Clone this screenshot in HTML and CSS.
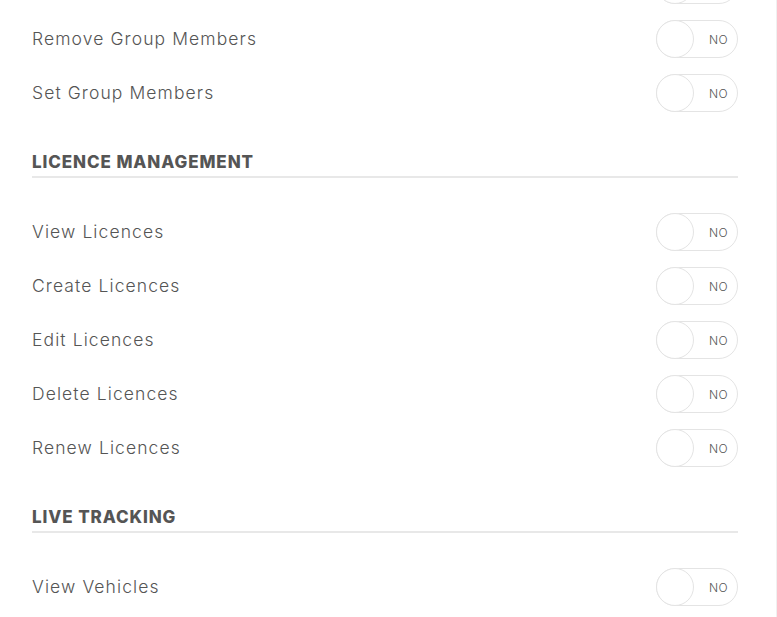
FILE: index.html
```html
<!DOCTYPE html>
<html lang="en">
<head>
  <meta charset="UTF-8" />
  <meta name="viewport" content="width=device-width, initial-scale=1.0" />
  <title>Permissions</title>
  <link rel="stylesheet" href="styles.css">
</head>
<body>

<div class="permissions">

  <div class="section">
    <div class="row">
      <span class="label">Add Group Members</span>
      <span class="toggle"><span class="knob"></span><span class="state">NO</span></span>
    </div>
    <div class="row">
      <span class="label">Remove Group Members</span>
      <span class="toggle"><span class="knob"></span><span class="state">NO</span></span>
    </div>
    <div class="row">
      <span class="label">Set Group Members</span>
      <span class="toggle"><span class="knob"></span><span class="state">NO</span></span>
    </div>
  </div>

  <div class="section">
    <h3>Licence Management</h3>
    <div class="row">
      <span class="label">View Licences</span>
      <span class="toggle"><span class="knob"></span><span class="state">NO</span></span>
    </div>
    <div class="row">
      <span class="label">Create Licences</span>
      <span class="toggle"><span class="knob"></span><span class="state">NO</span></span>
    </div>
    <div class="row">
      <span class="label">Edit Licences</span>
      <span class="toggle"><span class="knob"></span><span class="state">NO</span></span>
    </div>
    <div class="row">
      <span class="label">Delete Licences</span>
      <span class="toggle"><span class="knob"></span><span class="state">NO</span></span>
    </div>
    <div class="row">
      <span class="label">Renew Licences</span>
      <span class="toggle"><span class="knob"></span><span class="state">NO</span></span>
    </div>
  </div>

  <div class="section">
    <h3>Live Tracking</h3>
    <div class="row">
      <span class="label">View Vehicles</span>
      <span class="toggle"><span class="knob"></span><span class="state">NO</span></span>
    </div>
  </div>

</div>

</body>
</html>
```

FILE: styles.css
```css
* {
  margin: 0;
  padding: 0;
  box-sizing: border-box;
}

html, body {
  height: 100%;
  overflow: hidden;
  background: #fff;
  font-family: 'Inter', 'Open Sans', sans-serif;
  color: #555;
}

body {
  border-right: 1px solid #f0f0f0;
}

/* scrolled list, the row above is cut off */
.permissions {
  width: 738px;
  padding-left: 32px;
  margin-top: -42px;
}

.section h3 {
  margin-top: 32px;
  padding-bottom: 4px;
  border-bottom: 2px solid #e8e8e8;
  margin-bottom: 27px;
  font-size: 17px;
  line-height: 20px;
  font-weight: 800;
  text-transform: uppercase;
  letter-spacing: 0.9px;
  color: #555;
}

.row {
  display: flex;
  align-items: center;
  justify-content: space-between;
  height: 54px;
}

.label {
  padding-bottom: 2px;
  font-size: 17.5px;
  font-weight: 300;
  letter-spacing: 1.1px;
  color: #555;
}

/* Toggle */
.toggle {
  display: flex;
  align-items: center;
  width: 82px;
  height: 38px;
  border: 1px solid #e4e4e4;
  border-radius: 19px;
}

.knob {
  width: 38px;
  height: 38px;
  margin-left: -1px;
  border: 1px solid #e4e4e4;
  border-radius: 50%;
  background: #fff;
}

.state {
  flex: 1;
  text-align: center;
  padding-left: 6px;
  font-size: 12px;
  font-weight: 300;
  color: #555;
  letter-spacing: 0.5px;
}
```
